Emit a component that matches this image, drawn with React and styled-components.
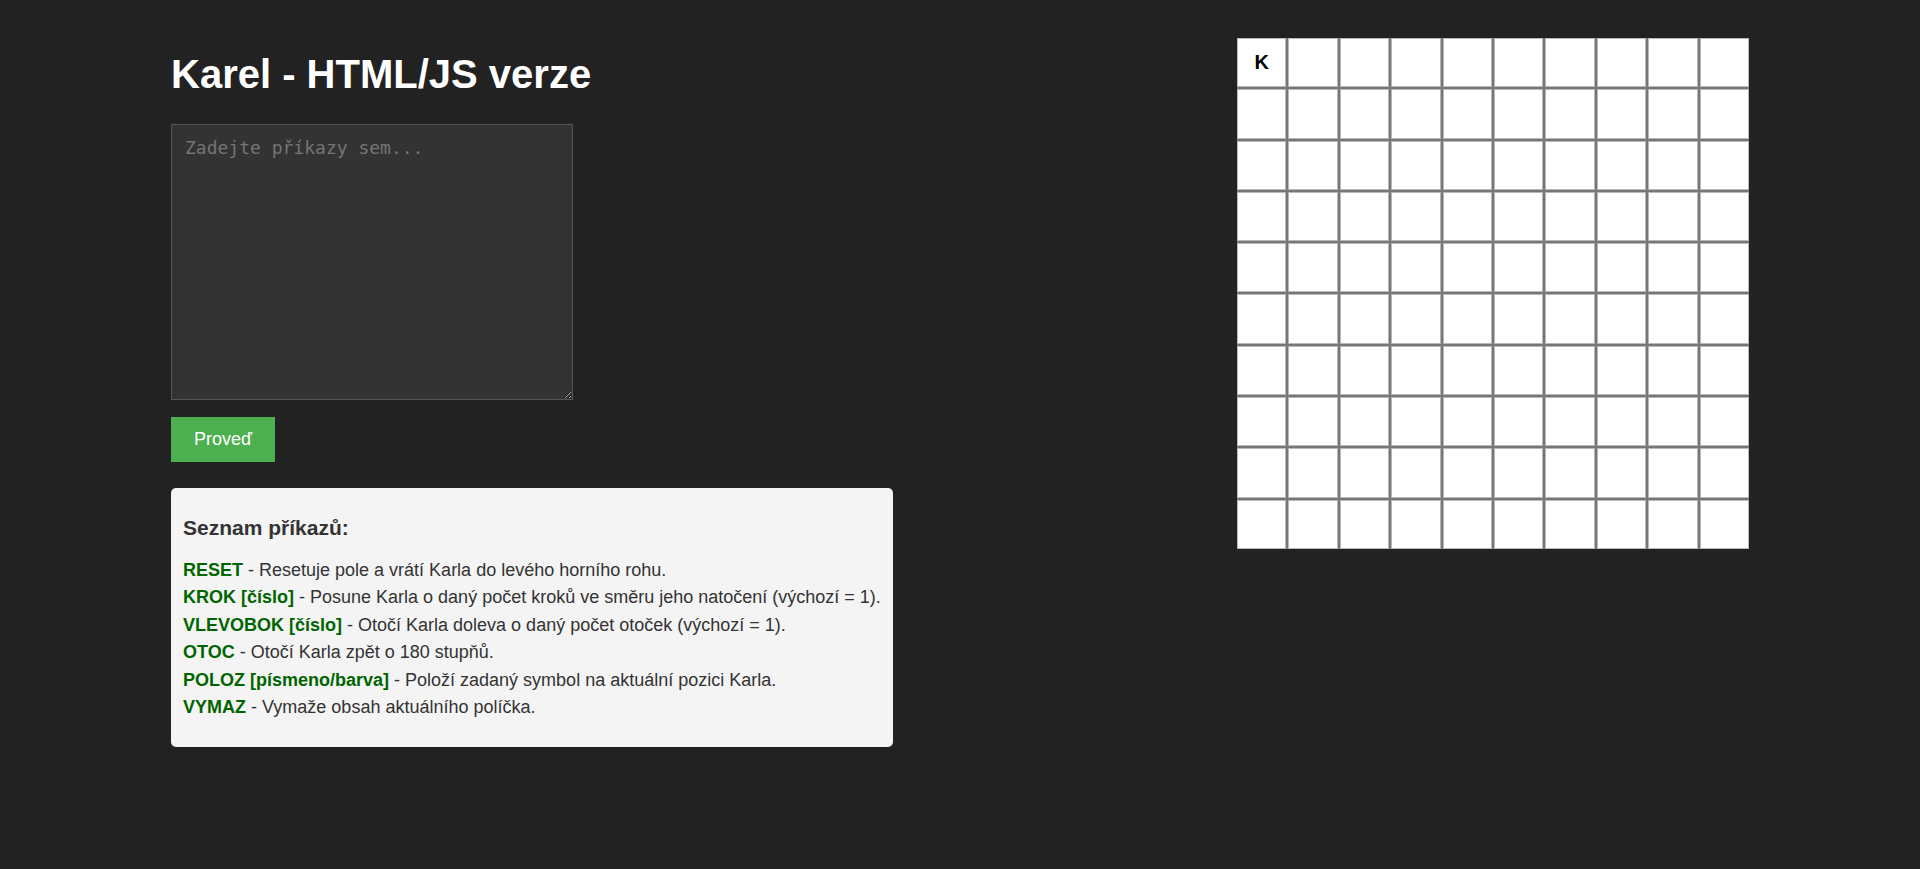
import React from "react";
import styled, { createGlobalStyle } from "styled-components";

const Global = createGlobalStyle`
  html, body { margin: 0; padding: 0; background: #222222; }
  body { font-family: "Liberation Sans", Arial, sans-serif; color: #f0f0f0; }
  * { box-sizing: border-box; }
`;

const Page = styled.div`
  display: flex;
  justify-content: space-between;
  align-items: flex-start;
  padding: 37px 171px 0 171px;
  min-height: 869px;
`;

const LeftColumn = styled.div`
  display: flex;
  flex-direction: column;
  align-items: flex-start;
`;

const Title = styled.h1`
  margin: 14px 0 27px 0;
  font-size: 40px;
  font-weight: bold;
  color: #ffffff;
  line-height: 46px;
`;

const Editor = styled.textarea`
  width: 402px;
  height: 276px;
  padding: 12px 13px;
  background: #333333;
  border: 1px solid #555555;
  color: #eeeeee;
  font-family: "DejaVu Sans Mono", monospace;
  font-size: 18px;
  outline: none;
  &::placeholder { color: #757575; }
`;

const RunButton = styled.button`
  margin-top: 17px;
  padding: 12px 23px;
  background: #4caf50;
  color: #ffffff;
  border: none;
  font-family: "Liberation Sans", Arial, sans-serif;
  font-size: 18px;
  cursor: pointer;
`;

const HelpBox = styled.div`
  margin-top: 26px;
  background: #f4f4f4;
  color: #333333;
  border-radius: 5px;
  padding: 10px 12px;
`;

const HelpTitle = styled.h3`
  margin: 18px 0 17px 0;
  font-size: 21px;
  line-height: 24px;
  font-weight: bold;
`;

const CommandList = styled.div`
  margin: 0 0 16px 0;
  font-size: 18px;
  line-height: 27.4px;
`;

const Command = styled.div``;

const Keyword = styled.strong`
  color: #006400;
`;

const Board = styled.div`
  display: grid;
  grid-template-columns: repeat(10, 1fr);
  grid-template-rows: repeat(10, 1fr);
  gap: 2px;
  width: 512px;
  height: 511px;
  background: #777777;
  margin-top: 1px;
`;

const Cell = styled.div`
  background: #ffffff;
  border: 1px solid #b8b8b8;
  display: flex;
  align-items: center;
  justify-content: center;
  color: #000000;
  font-family: "Liberation Sans", Arial, sans-serif;
  font-weight: bold;
  font-size: 20px;
`;

const commands = [
  ["RESET", "Resetuje pole a vrátí Karla do levého horního rohu."],
  ["KROK [číslo]", "Posune Karla o daný počet kroků ve směru jeho natočení (výchozí = 1)."],
  ["VLEVOBOK [číslo]", "Otočí Karla doleva o daný počet otoček (výchozí = 1)."],
  ["OTOC", "Otočí Karla zpět o 180 stupňů."],
  ["POLOZ [písmeno/barva]", "Položí zadaný symbol na aktuální pozici Karla."],
  ["VYMAZ", "Vymaže obsah aktuálního políčka."],
];

export default function App() {
  const cells = Array.from({ length: 100 }, (_, i) => i);
  return (
    <>
      <Global />
      <Page>
        <LeftColumn>
          <Title>Karel - HTML/JS verze</Title>
          <Editor placeholder="Zadejte příkazy sem..." />
          <RunButton>Proveď</RunButton>
          <HelpBox>
            <HelpTitle>Seznam příkazů:</HelpTitle>
            <CommandList>
              {commands.map(([k, d]) => (
                <Command key={k}>
                  <Keyword>{k}</Keyword> - {d}
                </Command>
              ))}
            </CommandList>
          </HelpBox>
        </LeftColumn>
        <Board>
          {cells.map((i) => (
            <Cell key={i}>{i === 0 ? "K" : ""}</Cell>
          ))}
        </Board>
      </Page>
    </>
  );
}
